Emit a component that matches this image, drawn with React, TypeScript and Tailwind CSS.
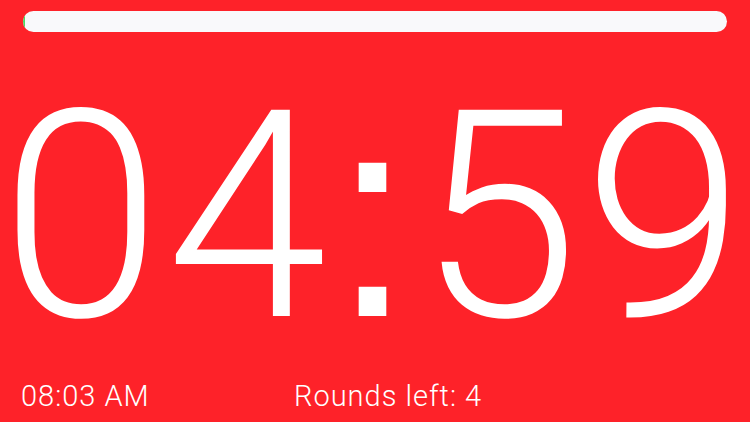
import React from "react";

export default function App() {
  return (
    <div
      className="w-[750px] h-[422px] bg-[#fe2229] flex flex-col overflow-hidden text-white"
      style={{ fontFamily: "Roboto, 'Noto Sans', sans-serif" }}
    >
      <div className="mt-[11px] mx-[23px] h-[21px] rounded-full bg-[#f9f9fb] overflow-hidden flex">
        <div className="w-[2px] h-full bg-[#4cd964]" />
      </div>
      <div className="mt-[38px] h-[290px] flex justify-center items-baseline text-[290px] leading-none font-light tabular-nums whitespace-nowrap tracking-[5px]">
        <span>04</span>
        <span className="font-normal" style={{ fontFamily: "'Liberation Sans', Arial, sans-serif" }}>:</span>
        <span>59</span>
      </div>
      <div className="mt-[22px] flex pl-[21px] text-[29px] leading-none font-light whitespace-nowrap tracking-[1px]">
        <div className="w-[273px]">08:03 AM</div>
        <div>Rounds left: 4</div>
      </div>
    </div>
  );
}
